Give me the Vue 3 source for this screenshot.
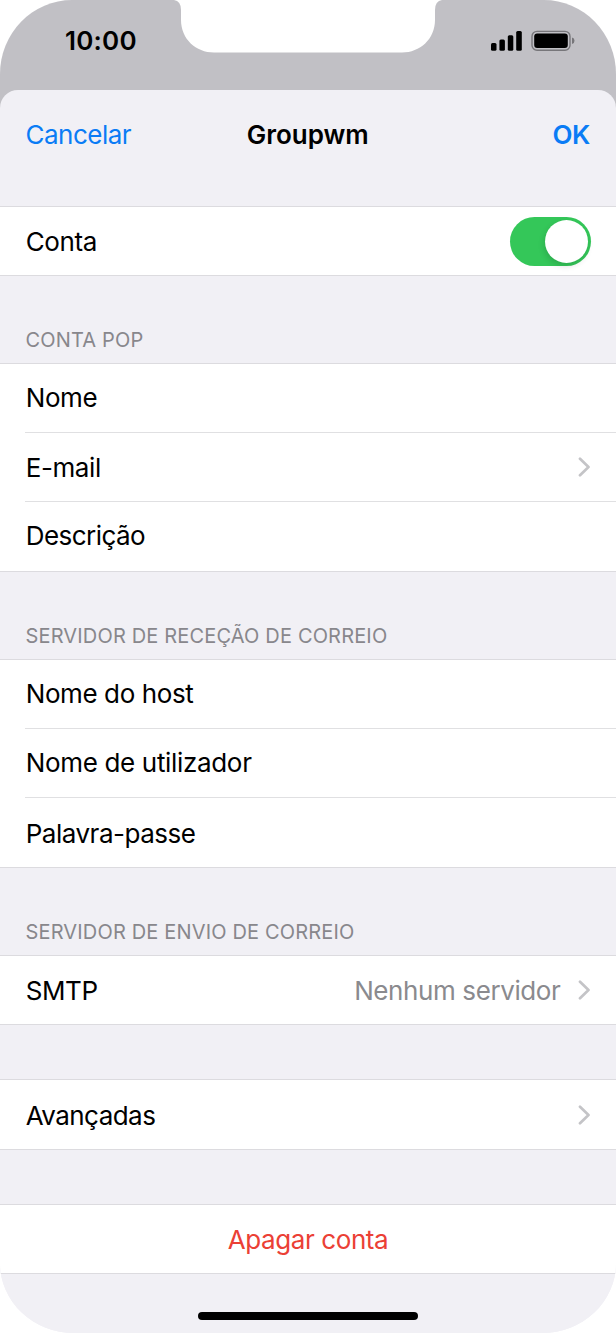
<script setup>
const groups = [
  { id: 'account', rows: [{ id: 'conta', label: 'Conta', toggle: true }] },
  {
    id: 'pop',
    title: 'CONTA POP',
    rows: [
      { id: 'nome', label: 'Nome' },
      { id: 'email', label: 'E-mail', chevron: true },
      { id: 'descricao', label: 'Descrição' }
    ]
  },
  {
    id: 'incoming',
    title: 'SERVIDOR DE RECEÇÃO DE CORREIO',
    rows: [
      { id: 'host', label: 'Nome do host' },
      { id: 'user', label: 'Nome de utilizador' },
      { id: 'password', label: 'Palavra-passe' }
    ]
  },
  {
    id: 'outgoing',
    title: 'SERVIDOR DE ENVIO DE CORREIO',
    rows: [{ id: 'smtp', label: 'SMTP', value: 'Nenhum servidor', chevron: true }]
  },
  { id: 'advanced', rows: [{ id: 'avancadas', label: 'Avançadas', chevron: true }] },
  { id: 'delete', rows: [{ id: 'apagar', label: 'Apagar conta' }] }
]
</script>

<template>
  <div class="phone">
    <div class="status">
      <span class="time">10:00</span>
      <svg class="notch" width="274" height="54" viewBox="0 0 274 54">
        <path d="M0 0 H3 Q10 1 10 10 V20 C10 39 25 52.5 43 52.5 H231 C249 52.5 264 39 264 20 V10 Q264 1 271 0 H274 Z" fill="#fff" />
      </svg>
      <svg class="indicators" width="86" height="22" viewBox="0 0 86 22">
        <rect x="1" y="13" width="5.5" height="7.8" rx="1.5" />
        <rect x="9.4" y="9.5" width="5.5" height="11.3" rx="1.5" />
        <rect x="17.8" y="5.3" width="5.5" height="15.5" rx="1.5" />
        <rect x="26.2" y="1" width="5.6" height="19.8" rx="1.5" />
        <rect x="42" y="1.4" width="38" height="18.8" rx="5" fill="none" stroke="#77767a" stroke-width="1.4" />
        <rect x="44.2" y="3.6" width="33.6" height="14.4" rx="3" />
        <path d="M82 7.5 Q84.5 8 84.5 10.8 Q84.5 13.6 82 14 Z" fill="#77767a" />
      </svg>
    </div>
    <main class="sheet">
      <header class="navbar">
        <span class="cancel">Cancelar</span>
        <span class="title">Groupwm</span>
        <span class="ok">OK</span>
      </header>
      <section v-for="g in groups" :key="g.id" class="group" :class="g.id">
        <h2 v-if="g.title" class="heading"><span>{{ g.title }}</span></h2>
        <div class="rows">
          <div v-for="r in g.rows" :key="r.id" class="row" :class="r.id">
            <span class="label">{{ r.label }}</span>
            <span v-if="r.value" class="value">{{ r.value }}</span>
            <span v-if="r.toggle" class="switch"><i class="knob"></i></span>
            <svg v-if="r.chevron" class="chevron" width="13" height="20" viewBox="0 0 13 20">
              <path d="M2 1.8 L10.5 10 L2 18.2" fill="none" stroke="#c4c4c7" stroke-width="2.7" stroke-linecap="round" stroke-linejoin="round" />
            </svg>
          </div>
        </div>
      </section>
      <div class="home"></div>
    </main>
  </div>
</template>

<style>
body {
  background: #fff;
}
</style>

<style scoped>
.phone {
  width: 616px;
  height: 1333px;
  display: flex;
  flex-direction: column;
  overflow: hidden;
  background: linear-gradient(#c1c0c5 200px, #f1f0f5 200px);
  border-radius: 72px 72px 74px 74px / 74px 74px 70px 70px;
  font-family: Inter, "Liberation Sans", sans-serif;
  font-size: 26px;
  color: #000;
}
.status {
  height: 90px;
  flex: none;
  display: grid;
  grid-template-columns: 171px 274px 1fr;
  align-items: start;
}
.time {
  margin: 25px 0 0 65px;
  line-height: 32px;
  font-weight: 600;
  letter-spacing: 0.2px;
}
.notch {
  display: block;
}
.indicators {
  margin: 30px 0 0 45px;
}
.sheet {
  flex: 1;
  display: flex;
  flex-direction: column;
  background: #f1f0f5;
  border-radius: 18px 18px 0 0;
}
.navbar {
  height: 116px;
  box-sizing: border-box;
  padding: 29px 26px 0 25.5px;
  display: grid;
  grid-template-columns: 1fr auto 1fr;
  line-height: 32px;
}
.cancel,
.ok {
  color: #0a7cf5;
}
.cancel {
  letter-spacing: -0.5px;
}
.title,
.ok {
  font-weight: 600;
}
.ok {
  text-align: right;
  letter-spacing: -0.4px;
}
.heading {
  height: 87px;
  margin: 0;
  box-sizing: border-box;
  padding: 52px 25px 0 25.5px;
  font-size: 20px;
  line-height: 24px;
  font-weight: 400;
  letter-spacing: 0.16px;
  color: #88878c;
}
.rows {
  background: #fff;
  border-top: 1px solid #dcdbdf;
  border-bottom: 1px solid #dcdbdf;
}
.row {
  position: relative;
  height: 68px;
  display: flex;
  align-items: center;
  padding: 0 25px 0 25.7px;
  line-height: 32px;
  letter-spacing: -0.4px;
}
.row + .row {
  height: 69px;
}
.row + .row::before {
  content: "";
  position: absolute;
  left: 25px;
  right: 0;
  top: 0;
  height: 1px;
  background: #e0e0e2;
}
.pop .row:last-child,
.incoming .row:last-child {
  height: 70px;
}
.conta .label,
.email .label,
.smtp .label,
.smtp .value,
.avancadas .label,
.apagar .label {
  padding-top: 2px;
}
.password .label {
  padding-top: 3px;
}
.user .label {
  letter-spacing: -0.33px;
}
.password .label {
  letter-spacing: -0.48px;
}
.descricao .label,
.avancadas .label {
  letter-spacing: -0.55px;
}
.advanced {
  margin-top: 54px;
}
.advanced .row {
  height: 69px;
}
.delete {
  margin-top: 54px;
}
.apagar {
  justify-content: center;
  padding: 0;
  color: #eb4035;
}
.value {
  margin-left: auto;
  margin-right: 17.6px;
  color: #8a8a8e;
}
.chevron {
  flex: none;
  margin-left: auto;
}
.value + .chevron {
  margin-left: 0;
}
.switch {
  margin-left: auto;
  width: 81px;
  height: 49px;
  box-sizing: border-box;
  padding: 3px;
  display: flex;
  justify-content: flex-end;
  border-radius: 25px;
  background: #34c759;
}
.knob {
  width: 43px;
  height: 43px;
  border-radius: 50%;
  background: #fff;
  box-shadow: -1px 3px 6px rgba(0, 0, 0, 0.14);
}
.home {
  width: 220px;
  height: 8px;
  margin: 38px auto 0;
  border-radius: 4px;
  background: #000;
}
</style>
